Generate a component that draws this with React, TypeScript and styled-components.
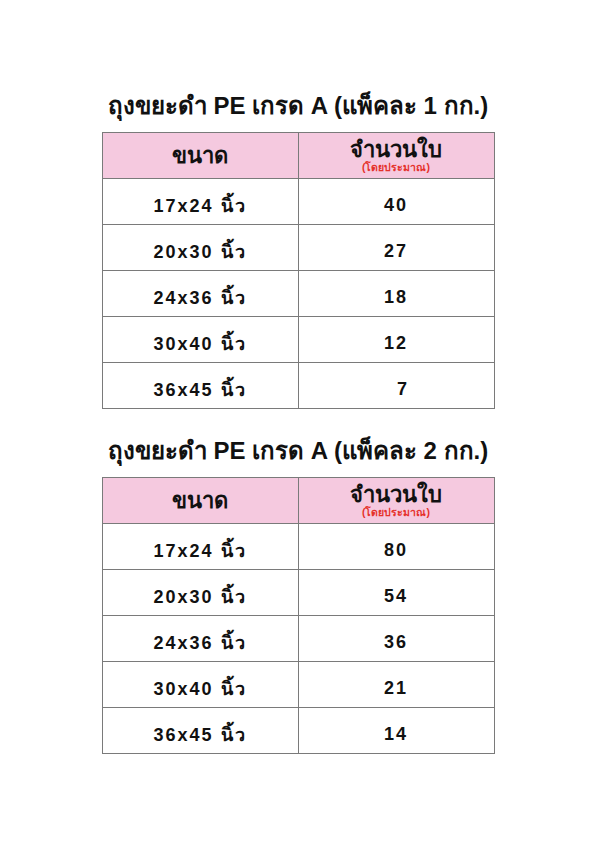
import React from 'react';
import styled, { createGlobalStyle } from 'styled-components';

const GlobalStyle = createGlobalStyle`
  html, body {
    margin: 0;
    padding: 0;
    background: #ffffff;
  }
  body {
    font-family: "Liberation Sans", "Noto Sans", sans-serif;
    color: #111;
  }
`;

const Page = styled.div`
  width: 596px;
  min-height: 843px;
  display: flex;
  flex-direction: column;
  align-items: center;
  padding-top: 90px;
  box-sizing: border-box;
`;

const Section = styled.section`
  display: flex;
  flex-direction: column;
  align-items: center;
  margin-bottom: 26px;
`;

const Title = styled.h1`
  margin: 0 0 10px 0;
  font-size: 24px;
  font-weight: 700;
  letter-spacing: 0;
  line-height: 32px;
  white-space: nowrap;
`;

const Table = styled.table`
  width: 393px;
  border-collapse: collapse;
`;

const HeadCell = styled.th`
  height: 45px;
  background: #f5c9df;
  border: 1px solid #7a7a7a;
  padding: 0;
  font-size: 22px;
  font-weight: 700;
  vertical-align: middle;
  line-height: 1;
`;

const HeadStack = styled.div`
  display: flex;
  flex-direction: column;
  align-items: center;
  gap: 1px;
`;

const Note = styled.span`
  color: #e5312b;
  font-size: 10.5px;
  font-weight: 700;
`;

const Cell = styled.td`
  height: 38px;
  border: 1px solid #7a7a7a;
  padding: 7px 0 0 0;
  text-align: center;
  font-size: 18px;
  font-weight: 700;
  letter-spacing: 2px;
  white-space: pre;
`;

type Row = { size: string; count: string };

const tables: { title: string; rows: Row[] }[] = [
  {
    title: 'ถุงขยะดำ PE เกรด A (แพ็คละ 1 กก.)',
    rows: [
      { size: '17x24 นิ้ว', count: '40' },
      { size: '20x30 นิ้ว', count: '27' },
      { size: '24x36 นิ้ว', count: '18' },
      { size: '30x40 นิ้ว', count: '12' },
      { size: '36x45 นิ้ว', count: '  7' },
    ],
  },
  {
    title: 'ถุงขยะดำ PE เกรด A (แพ็คละ 2 กก.)',
    rows: [
      { size: '17x24 นิ้ว', count: '80' },
      { size: '20x30 นิ้ว', count: '54' },
      { size: '24x36 นิ้ว', count: '36' },
      { size: '30x40 นิ้ว', count: '21' },
      { size: '36x45 นิ้ว', count: '14' },
    ],
  },
];

export default function App() {
  return (
    <>
      <GlobalStyle />
      <Page>
        {tables.map(t => (
          <Section key={t.title}>
            <Title>{t.title}</Title>
            <Table>
              <thead>
                <tr>
                  <HeadCell style={{ width: '50%' }}>ขนาด</HeadCell>
                  <HeadCell>
                    <HeadStack>
                      จำนวนใบ
                      <Note>(โดยประมาณ)</Note>
                    </HeadStack>
                  </HeadCell>
                </tr>
              </thead>
              <tbody>
                {t.rows.map(r => (
                  <tr key={r.size}>
                    <Cell>{r.size}</Cell>
                    <Cell>{r.count}</Cell>
                  </tr>
                ))}
              </tbody>
            </Table>
          </Section>
        ))}
      </Page>
    </>
  );
}
